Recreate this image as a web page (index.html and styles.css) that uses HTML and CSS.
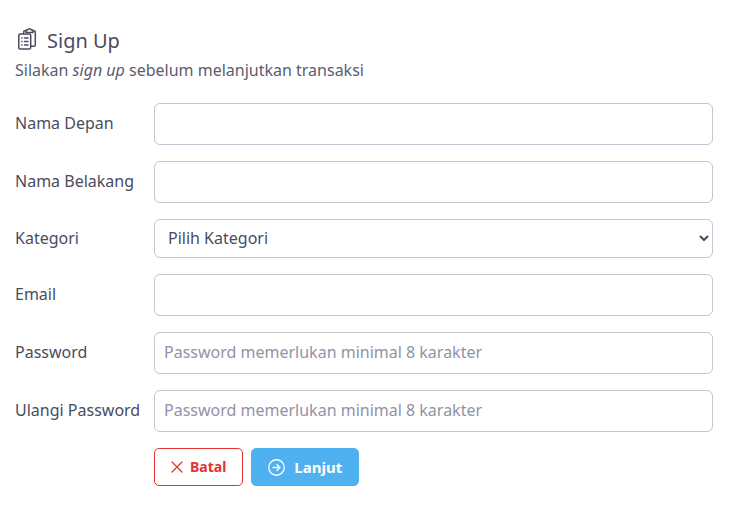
FILE: index.html
```html
<!DOCTYPE html>
<html lang="id">
<head>
<meta charset="utf-8">
<meta name="viewport" content="width=device-width, initial-scale=1">
<title>Sign Up</title>
<link rel="stylesheet" href="styles.css">
</head>
<body>
<main class="signup">
  <header class="heading">
    <h1 class="title">
      <svg class="title-icon" viewBox="0 0 20 24" fill="none" stroke="currentColor" stroke-width="1.5" stroke-linejoin="round" stroke-linecap="round" aria-hidden="true">
        <rect x="1.8" y="6.9" width="11.9" height="15.2" rx="1.4"/>
        <path d="M6.6 6.4V5Q6.6 3.7 8 3.7H9M16 3.7H16.9Q18.3 3.7 18.3 5.1V17.8Q18.3 19.3 16.9 19.3H14.4"/>
        <path d="M9 5.5V3.6Q9 3 9.6 3H10.6Q11 1.7 12.5 1.7T14.4 3H15.4Q16 3 16 3.6V5.5Z"/>
        <path d="M4.8 11.1H5M4.8 14.6H5M4.8 18.1H5M7.5 11.1H11M7.5 14.6H11M7.5 18.1H11"/>
      </svg>
      Sign Up
    </h1>
    <p class="lead">Silakan <em>sign up</em> sebelum melanjutkan transaksi</p>
  </header>
  <form class="form">
    <label class="label" for="first">Nama Depan</label>
    <input class="field" id="first" type="text">
    <label class="label" for="last">Nama Belakang</label>
    <input class="field" id="last" type="text">
    <label class="label" for="category">Kategori</label>
    <select class="field field-select" id="category"><option>Pilih Kategori</option></select>
    <label class="label" for="email">Email</label>
    <input class="field" id="email" type="email">
    <label class="label" for="password">Password</label>
    <input class="field" id="password" type="password" placeholder="Password memerlukan minimal 8 karakter">
    <label class="label" for="repeat">Ulangi Password</label>
    <input class="field" id="repeat" type="password" placeholder="Password memerlukan minimal 8 karakter">
    <div class="actions">
      <button class="button button-cancel" type="button">
        <svg class="cross" viewBox="0 0 12 12" fill="none" stroke="currentColor" stroke-width="1.3" stroke-linecap="round" aria-hidden="true"><path d="M1 1L11 11M11 1L1 11"/></svg>
        Batal
      </button>
      <button class="button button-next" type="submit">
        <svg class="arrow" viewBox="0 0 16 16" fill="none" stroke="currentColor" stroke-width="1.2" stroke-linecap="round" stroke-linejoin="round" aria-hidden="true"><circle cx="8" cy="8" r="7.3"/><path d="M4.7 8H11.2M8.4 5.2L11.2 8L8.4 10.8"/></svg>
        Lanjut
      </button>
    </div>
  </form>
</main>
</body>
</html>
```
FILE: styles.css
```css
* {
  box-sizing: border-box;
}

body {
  margin: 0;
  background: #fff;
  color: #4b4b60;
  font-family: "Noto Sans", "Open Sans", sans-serif;
  font-size: 16px;
  line-height: 24px;
}

.signup {
  padding: 26px 19px 28px 15px;
}

.heading {
  margin-bottom: 21px;
}

.title {
  display: flex;
  align-items: center;
  gap: 10px;
  margin: 0 0 2px;
  font-size: 20px;
  font-weight: 400;
  line-height: 30px;
}

.title-icon {
  width: 20px;
  height: 24px;
  margin: 0 0 4px 2px;
}

.lead {
  margin: 0;
  color: #5c5c70;
}

.form {
  display: grid;
  grid-template-columns: 123px 1fr;
  gap: 16px;
  align-items: center;
}

.label {
  padding-bottom: 2px;
  white-space: nowrap;
}

.field {
  width: 100%;
  height: 42px;
  padding: 0 9px 2px;
  border: 1px solid #c4c4d2;
  border-radius: 6px;
  background: #fff;
  color: #4b4b60;
  font: inherit;
}

.field::placeholder {
  color: #9292a5;
  opacity: 1;
}

.field-select {
  height: 39px;
  padding: 0 0 2px 9px;
}

.actions {
  display: flex;
  gap: 8px;
  grid-column: 2;
}

.button {
  display: flex;
  align-items: center;
  height: 38px;
  padding: 0 16px;
  border: 1px solid;
  border-radius: 5px;
  font: inherit;
  font-weight: 700;
}

.button-cancel {
  gap: 7px;
  border-color: #e3342f;
  background: #fff;
  color: #e3342f;
  font-size: 14px;
}

.button-next {
  gap: 9px;
  border-color: #50b1f0;
  background: #50b1f0;
  color: #fff;
  font-size: 15px;
}

.cross {
  width: 12px;
  height: 12px;
}

.arrow {
  width: 17px;
  height: 17px;
}
```
